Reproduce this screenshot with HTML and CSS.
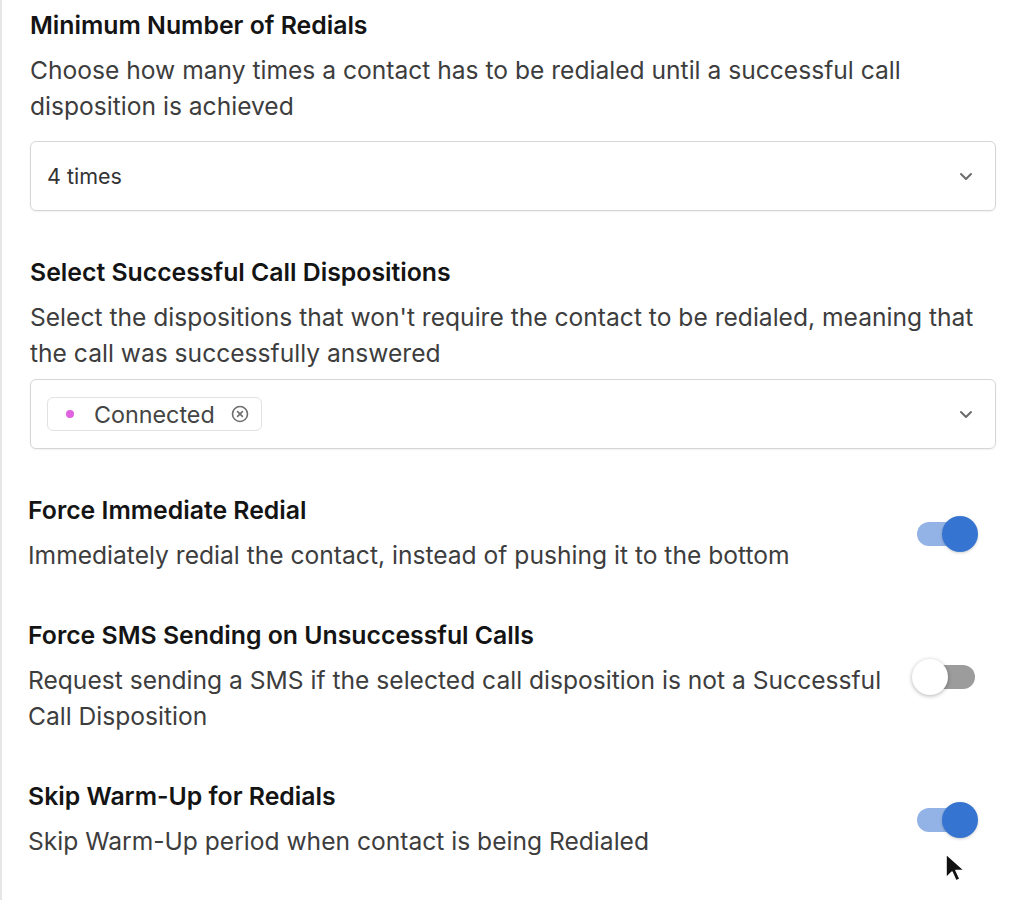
FILE: index.html
```html
<!DOCTYPE html>
<html lang="en">
<head>
    <meta charset="UTF-8">
    <meta name="viewport" content="width=device-width, initial-scale=1.0">
    <title>Redial Settings</title>
    <link rel="stylesheet" href="styles.css">
</head>
<body>
    <div id="panel">
        <section class="field">
            <h3 class="field-title">Minimum Number of Redials</h3>
            <p class="field-desc">Choose how many times a contact has to be redialed until a successful call disposition is achieved</p>
            <div class="select select-single">
                <span class="select-value">4 times</span>
                <svg class="chevron" width="14" height="9" viewBox="0 0 14 9"><path d="M2 2l5 5 5-5" fill="none" stroke="#6b6b6b" stroke-width="2" stroke-linecap="round" stroke-linejoin="round"/></svg>
            </div>
        </section>

        <section class="field">
            <h3 class="field-title">Select Successful Call Dispositions</h3>
            <p class="field-desc">Select the dispositions that won't require the contact to be redialed, meaning that the call was successfully answered</p>
            <div class="select select-multi">
                <span class="chip">
                    <span class="chip-dot"></span>
                    <span class="chip-label">Connected</span>
                    <svg class="chip-remove" width="18" height="18" viewBox="0 0 18 18"><circle cx="9" cy="9" r="7.5" fill="none" stroke="#6f6f6f" stroke-width="1.6"/><path d="M6.6 6.6l4.8 4.8M11.4 6.6l-4.8 4.8" stroke="#6f6f6f" stroke-width="1.6" stroke-linecap="round"/></svg>
                </span>
                <svg class="chevron" width="14" height="9" viewBox="0 0 14 9"><path d="M2 2l5 5 5-5" fill="none" stroke="#6b6b6b" stroke-width="2" stroke-linecap="round" stroke-linejoin="round"/></svg>
            </div>
        </section>

        <section class="toggle-row">
            <div class="toggle-text">
                <h3 class="field-title">Force Immediate Redial</h3>
                <p class="field-desc">Immediately redial the contact, instead of pushing it to the bottom</p>
            </div>
            <span class="switch on"><span class="knob"></span></span>
        </section>

        <section class="toggle-row">
            <div class="toggle-text">
                <h3 class="field-title">Force SMS Sending on Unsuccessful Calls</h3>
                <p class="field-desc">Request sending a SMS if the selected call disposition is not a Successful Call Disposition</p>
            </div>
            <span class="switch"><span class="knob"></span></span>
        </section>

        <section class="toggle-row">
            <div class="toggle-text">
                <h3 class="field-title">Skip Warm-Up for Redials</h3>
                <p class="field-desc">Skip Warm-Up period when contact is being Redialed</p>
            </div>
            <span class="switch on"><span class="knob"></span></span>
        </section>

        <svg class="cursor" width="22" height="32" viewBox="0 0 22 32"><path d="M2 1v24l6-6 4 9 4-2-4-8.5h8.5z" fill="#111" stroke="#fff" stroke-width="1.6" stroke-linejoin="round"/></svg>
    </div>
</body>
</html>
```

FILE: styles.css
```css
body {
    margin: 0;
    background-color: #fff;
    font-family: Inter, "Noto Sans", sans-serif;
    color: #1a1a1a;
}
#panel {
    position: relative;
    min-height: 900px;
    box-sizing: border-box;
    border-left: 2px solid #e6e6e6;
    padding: 10px 28px 0 26px;
}
.field {
    padding-left: 2px;
    margin-bottom: 46px;
}
.field-title {
    margin: 0;
    font-size: 24.8px;
    line-height: 30px;
    font-weight: 600;
    color: #141414;
}
.field-desc {
    margin: 12px 0 0;
    font-size: 24.6px;
    line-height: 36px;
    color: #3d3d3d;
}
.select {
    display: flex;
    align-items: center;
    justify-content: space-between;
    height: 70px;
    box-sizing: border-box;
    padding: 0 22px 0 16px;
    border: 1px solid #d6d6d6;
    border-radius: 6px;
    box-shadow: 0 1px 2px rgba(0, 0, 0, 0.06);
}
.select-single {
    margin-top: 17px;
}
.select-multi {
    margin-top: 8px;
}
.select-value {
    font-size: 21.5px;
    color: #333;
}
.chip {
    display: flex;
    align-items: center;
    height: 34px;
    box-sizing: border-box;
    padding: 0 12px 0 18px;
    border: 1px solid #e2e2e2;
    border-radius: 6px;
}
.chip-dot {
    width: 8px;
    height: 8px;
    border-radius: 50%;
    background-color: #e062e0;
    margin-right: 20px;
}
.chip-label {
    font-size: 23.3px;
    color: #444;
    margin-right: 16px;
}
.toggle-row {
    display: flex;
    align-items: center;
    justify-content: space-between;
    padding-right: 21px;
    margin-bottom: 47px;
}
.switch {
    position: relative;
    width: 58px;
    height: 24px;
    border-radius: 12px;
    background-color: #9c9c9c;
    flex-shrink: 0;
}
.switch .knob {
    position: absolute;
    top: -6px;
    left: -5px;
    width: 36px;
    height: 36px;
    border-radius: 50%;
    background-color: #fff;
    box-shadow: 0 1px 4px rgba(0, 0, 0, 0.3);
}
.switch.on {
    background-color: #93b3e6;
}
.switch.on .knob {
    left: auto;
    right: -3px;
    background-color: #3674d1;
    box-shadow: 0 1px 3px rgba(0, 0, 0, 0.2);
}
.cursor {
    position: absolute;
    left: 942px;
    top: 853px;
}
```
